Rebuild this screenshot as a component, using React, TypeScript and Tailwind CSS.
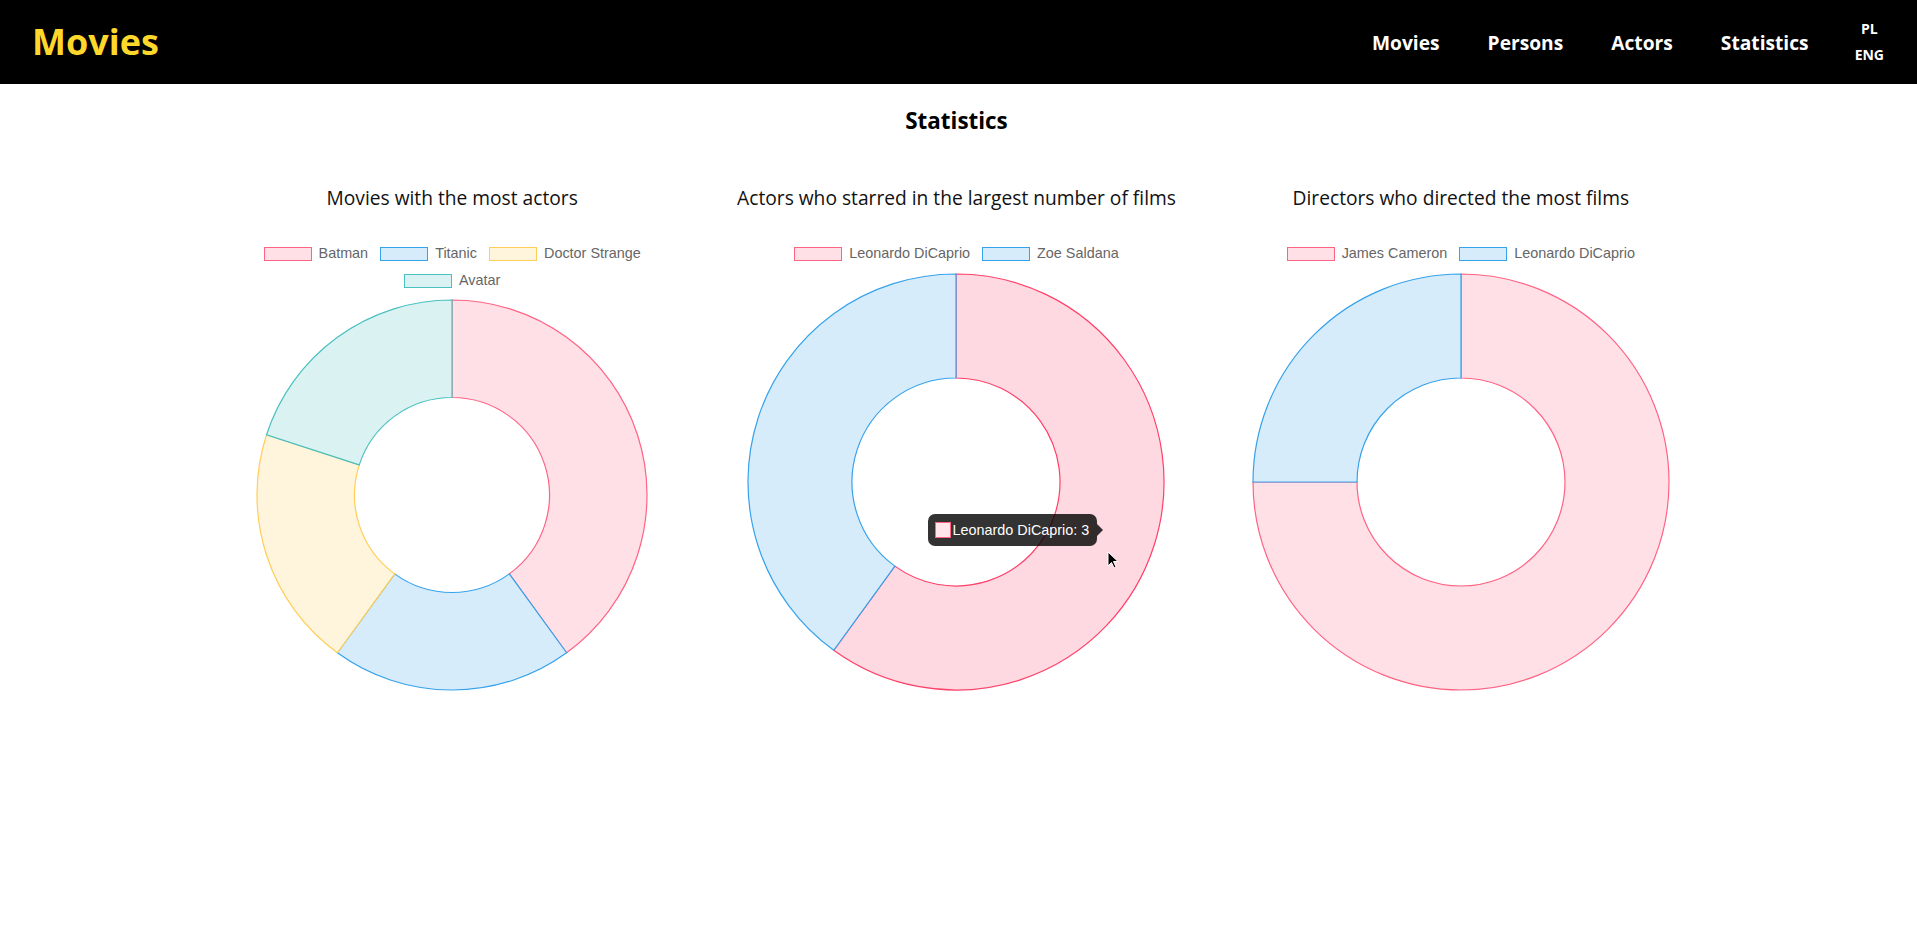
import React from "react";

type Slice = { label: string; value: number; fill: string; stroke: string };

const PINK = { fill: "#ffe0e6", stroke: "#ff6384" };
const BLUE = { fill: "#d7ecfb", stroke: "#36a2eb" };
const YELLOW = { fill: "#fff5dd", stroke: "#ffce56" };
const TEAL = { fill: "#dbf2f2", stroke: "#4bc0c0" };

const charts: { title: string; radius: number; slices: Slice[]; hover?: number }[] = [
  {
    title: "Movies with the most actors",
    radius: 195,
    slices: [
      { label: "Batman", value: 2, ...PINK },
      { label: "Titanic", value: 1, ...BLUE },
      { label: "Doctor Strange", value: 1, ...YELLOW },
      { label: "Avatar", value: 1, ...TEAL },
    ],
  },
  {
    title: "Actors who starred in the largest number of films",
    radius: 208,
    hover: 0,
    slices: [
      { label: "Leonardo DiCaprio", value: 3, ...PINK },
      { label: "Zoe Saldana", value: 2, ...BLUE },
    ],
  },
  {
    title: "Directors who directed the most films",
    radius: 208,
    slices: [
      { label: "James Cameron", value: 3, ...PINK },
      { label: "Leonardo DiCaprio", value: 1, ...BLUE },
    ],
  },
];

function point(c: number, r: number, deg: number) {
  const a = (deg * Math.PI) / 180;
  return [c + r * Math.sin(a), c - r * Math.cos(a)];
}

function arcPath(c: number, R: number, r: number, a0: number, a1: number) {
  const large = a1 - a0 > 180 ? 1 : 0;
  const [x0, y0] = point(c, R, a0);
  const [x1, y1] = point(c, R, a1);
  const [x2, y2] = point(c, r, a1);
  const [x3, y3] = point(c, r, a0);
  return `M${x0} ${y0} A${R} ${R} 0 ${large} 1 ${x1} ${y1} L${x2} ${y2} A${r} ${r} 0 ${large} 0 ${x3} ${y3} Z`;
}

function Doughnut({ radius, slices, hover }: { radius: number; slices: Slice[]; hover?: number }) {
  const size = radius * 2 + 4;
  const c = size / 2;
  const total = slices.reduce((s, x) => s + x.value, 0);
  let start = 0;
  return (
    <svg width={size} height={size} viewBox={`0 0 ${size} ${size}`}>
      {slices.map((s, i) => {
        const end = start + (s.value / total) * 360;
        const d = arcPath(c, radius, radius / 2, start, end);
        start = end;
        const hovered = hover === i;
        return (
          <path
            key={s.label}
            d={d}
            fill={hovered ? "#ffd9e1" : s.fill}
            stroke={hovered ? "#ff4069" : s.stroke}
            strokeWidth={1.2}
          />
        );
      })}
    </svg>
  );
}

function Legend({ slices }: { slices: Slice[] }) {
  return (
    <div className="flex flex-wrap justify-center gap-x-[12px] px-6 font-['Liberation_Sans',Arial,sans-serif] text-[14.4px] text-[#666]">
      {slices.map((s) => (
        <div key={s.label} className="flex h-[26.4px] items-center">
          <span
            className="mr-[7px] h-[14px] w-[48px] border-[1.5px]"
            style={{ backgroundColor: s.fill, borderColor: s.stroke }}
          />
          <span>{s.label}</span>
        </div>
      ))}
    </div>
  );
}

function Tooltip() {
  return (
    <div className="absolute left-[182px] top-[242px] flex items-center">
      <div className="flex h-[32px] items-center rounded-[7px] bg-black/80 pl-[7px] pr-[8px] font-['Liberation_Sans',Arial,sans-serif] text-[14.4px] text-white">
        <span className="mr-[1px] h-[16px] w-[16px] border-[1.5px] border-[#ff6384] bg-[#ffe6eb]" />
        <span>Leonardo DiCaprio: 3</span>
      </div>
      <div className="h-0 w-0 border-y-[6px] border-l-[6px] border-y-transparent border-l-black/80" />
    </div>
  );
}

function Cursor() {
  return (
    <svg className="absolute left-[361px] top-[279px]" width="13" height="19" viewBox="0 0 13 19">
      <path
        d="M1 1 L1 15 L4.5 11.5 L7 17 L9 16 L6.5 10.5 L11 10.5 Z"
        fill="#000"
        stroke="#fff"
        strokeWidth="1"
        strokeLinejoin="round"
      />
    </svg>
  );
}

export default function App() {
  return (
    <div className="min-h-screen bg-white font-['Open_Sans',sans-serif]">
      {/* HEADER */}
      <header className="flex h-[84px] items-center justify-between bg-black pl-8 pr-[33px]">
        <span className="text-[36px] font-bold leading-none text-[#fdd82a]">Movies</span>
        <nav className="flex items-center">
          <div className="mt-[2px] flex gap-[48px] text-[19.2px] font-bold text-white">
            <a>Movies</a>
            <a>Persons</a>
            <a>Actors</a>
            <a>Statistics</a>
          </div>
          <div className="ml-[46px] flex flex-col items-center text-[14px] font-bold leading-[26px] text-white">
            <span>PL</span>
            <span>ENG</span>
          </div>
        </nav>
      </header>

      <main className="pr-[4px]">
        <h1 className="mt-[21px] text-center text-[22.4px] font-bold leading-[32px] text-black">Statistics</h1>

        <div className="mx-auto mt-[47px] grid w-[1513px] grid-cols-3">
          {charts.map((ch, i) => (
            <section key={ch.title} className="flex flex-col items-center">
              <h2 className="text-[19.2px] leading-[28px] text-[#111]">{ch.title}</h2>
              <div className="mt-[29px] w-full">
                <Legend slices={ch.slices} />
              </div>
              <div className={`relative ${i === 0 ? "mt-[4px]" : "mt-[5px]"}`}>
                <Doughnut radius={ch.radius} slices={ch.slices} hover={ch.hover} />
                {i === 1 && (
                  <>
                    <Tooltip />
                    <Cursor />
                  </>
                )}
              </div>
            </section>
          ))}
        </div>
      </main>
    </div>
  );
}
